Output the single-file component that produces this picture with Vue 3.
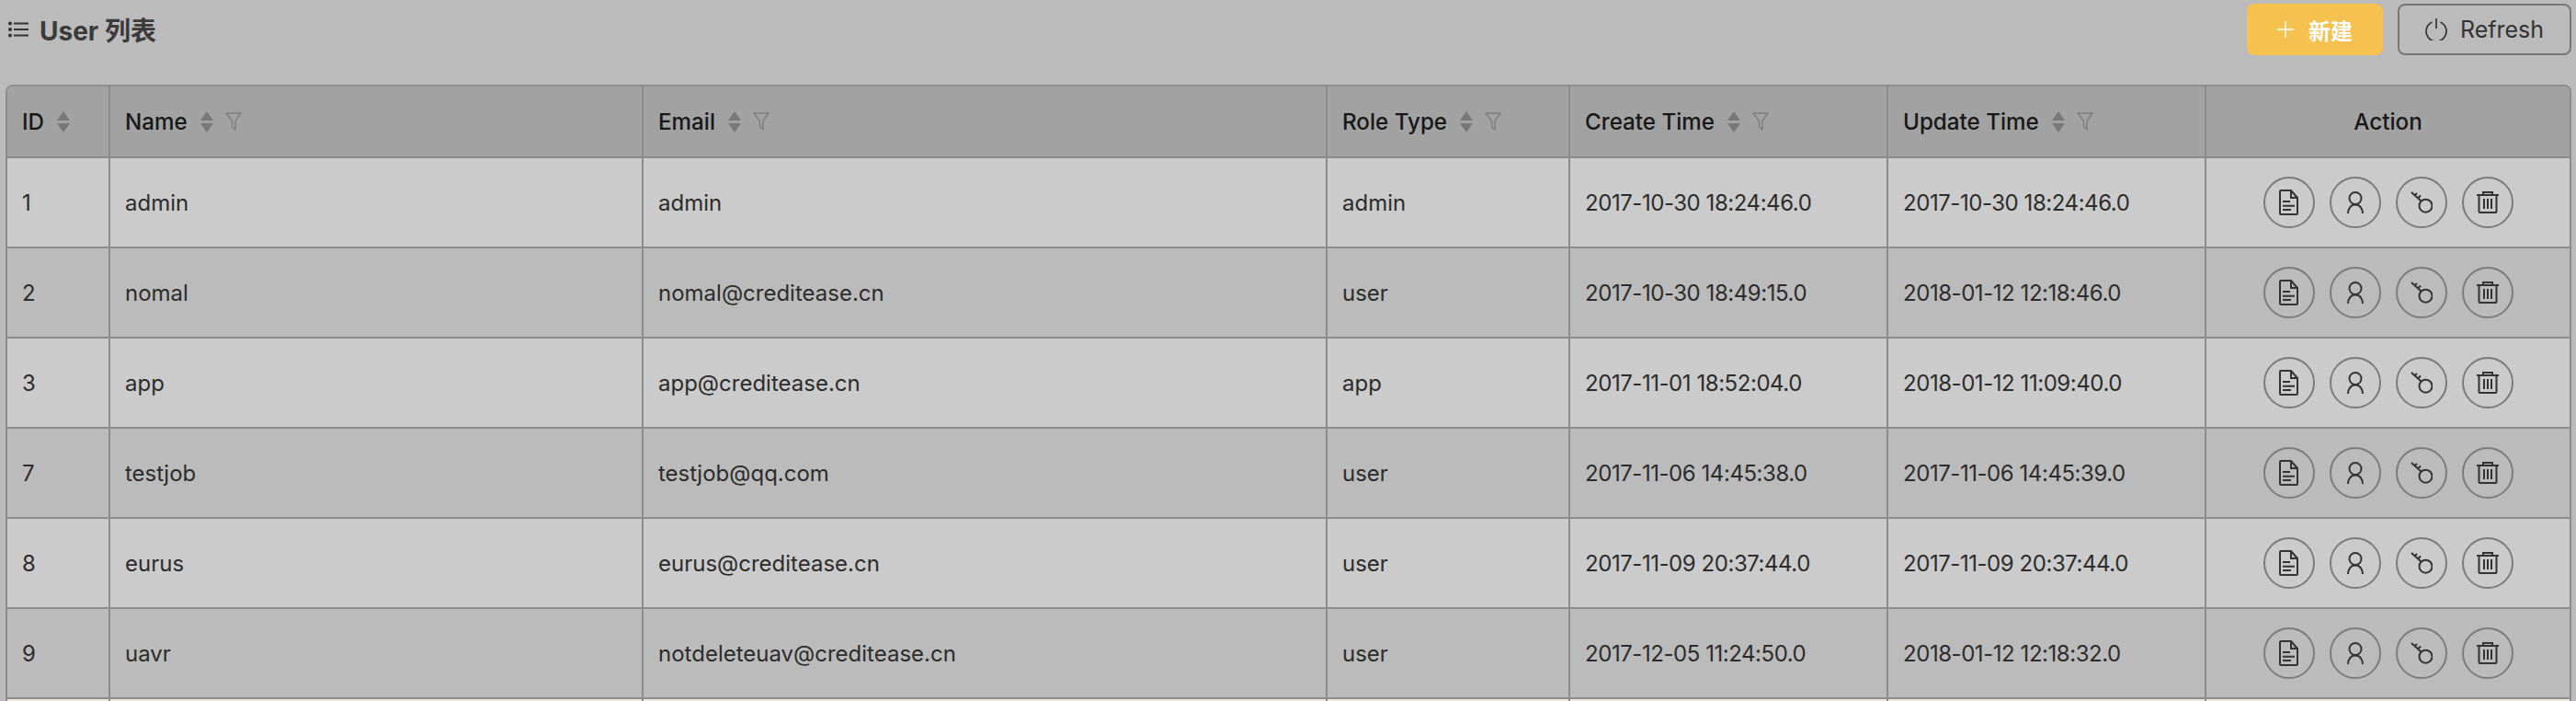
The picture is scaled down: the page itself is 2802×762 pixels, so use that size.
<template>
  <div class="page">
    <div class="top">
      <div class="title">
        <svg class="list-ic" viewBox="0 0 22 18" width="22" height="18">
          <g fill="#333">
            <circle cx="2" cy="2.5" r="2" />
            <circle cx="2" cy="9" r="2" />
            <circle cx="2" cy="15.5" r="2" />
            <rect x="6" y="1.5" width="16" height="2" />
            <rect x="6" y="8" width="16" height="2" />
            <rect x="6" y="14.5" width="16" height="2" />
          </g>
        </svg>
        <span>User 列表</span>
      </div>
      <div class="btns">
        <div class="btn add">
          <svg viewBox="0 0 18 18" width="18" height="18"><path d="M9 0v18M0 9h18" stroke="#fff" stroke-width="1.6" fill="none" /></svg>
          <span>新建</span>
        </div>
        <div class="btn refresh">
          <svg viewBox="0 0 24 24" width="24" height="24"><path d="M7.5 4a11 11 0 1 0 9 0M12 0v11" stroke="#333" stroke-width="1.7" fill="none" /></svg>
          <span>Refresh</span>
        </div>
      </div>
    </div>
    <div class="table">
      <div class="row head">
        <div v-for="c in cols" :key="c.key" class="cell" :class="c.cls">
          <span>{{ c.label }}</span>
          <span v-if="c.sort" class="sort"><i class="up"></i><i class="down"></i></span>
          <svg v-if="c.filter" class="filter" viewBox="0 0 18 20" width="18" height="20">
            <path d="M1 1h16l-6 8.500V19l-3.500-3V9.500z" fill="none" stroke="#7f7f7f" stroke-width="1.500" stroke-linejoin="round" />
          </svg>
        </div>
      </div>
      <div v-for="u in users" :key="u.id" class="row">
        <div class="cell c-id">{{ u.id }}</div>
        <div class="cell c-name">{{ u.name }}</div>
        <div class="cell c-email">{{ u.email }}</div>
        <div class="cell c-role">{{ u.role }}</div>
        <div class="cell c-time">{{ u.created }}</div>
        <div class="cell c-time">{{ u.updated }}</div>
        <div class="cell c-action">
          <span class="circle">
            <svg viewBox="0 0 21 28" width="21" height="28" fill="none" stroke="#333" stroke-width="2">
              <path d="M2 1h11l7 8v17a1 1 0 0 1-1 1H2a1 1 0 0 1-1-1V2a1 1 0 0 1 1-1zM13 1v8h7M4 13h8M4 17.700h13M4 22h9" />
            </svg>
          </span>
          <span class="circle">
            <svg viewBox="0 0 18 24" width="18" height="24" fill="none" stroke="#333" stroke-width="2">
              <circle cx="9" cy="7.500" r="6.500" />
              <path d="M1 24c0-5 3-9.500 8-9.500s8 4.500 8 9.500" />
            </svg>
          </span>
          <span class="circle">
            <svg viewBox="0 0 24 24" width="24" height="24" fill="none" stroke="#333" stroke-width="2">
              <circle cx="16.500" cy="15.700" r="7" />
              <path d="M1 1l10.500 9.500M4.500 4.500L7 2M8 7.500l3-3" />
            </svg>
          </span>
          <span class="circle">
            <svg viewBox="0 0 24 24" width="24" height="24" fill="none" stroke="#333" stroke-width="2">
              <path d="M0 4h24M7 4V1h10v3M2.500 4v18a1 1 0 0 0 1 1h17a1 1 0 0 0 1-1V4M8 8v11M12 8v11M16 8v11" />
            </svg>
          </span>
        </div>
      </div>
      <div class="row last">
        <div class="cell c-id"></div>
        <div class="cell c-name"></div>
        <div class="cell c-email"></div>
        <div class="cell c-role"></div>
        <div class="cell c-time"></div>
        <div class="cell c-time"></div>
        <div class="cell c-action"></div>
      </div>
    </div>
  </div>
</template>

<script setup>
const cols = [
  { key: 'id', label: 'ID', cls: 'c-id', sort: true },
  { key: 'name', label: 'Name', cls: 'c-name', sort: true, filter: true },
  { key: 'email', label: 'Email', cls: 'c-email', sort: true, filter: true },
  { key: 'role', label: 'Role Type', cls: 'c-role', sort: true, filter: true },
  { key: 'created', label: 'Create Time', cls: 'c-time', sort: true, filter: true },
  { key: 'updated', label: 'Update Time', cls: 'c-time', sort: true, filter: true },
  { key: 'action', label: 'Action', cls: 'c-action' }
]

const users = [
  { id: 1, name: 'admin', email: 'admin', role: 'admin', created: '2017-10-30 18:24:46.0', updated: '2017-10-30 18:24:46.0' },
  { id: 2, name: 'nomal', email: 'nomal@creditease.cn', role: 'user', created: '2017-10-30 18:49:15.0', updated: '2018-01-12 12:18:46.0' },
  { id: 3, name: 'app', email: 'app@creditease.cn', role: 'app', created: '2017-11-01 18:52:04.0', updated: '2018-01-12 11:09:40.0' },
  { id: 7, name: 'testjob', email: 'testjob@qq.com', role: 'user', created: '2017-11-06 14:45:38.0', updated: '2017-11-06 14:45:39.0' },
  { id: 8, name: 'eurus', email: 'eurus@creditease.cn', role: 'user', created: '2017-11-09 20:37:44.0', updated: '2017-11-09 20:37:44.0' },
  { id: 9, name: 'uavr', email: 'notdeleteuav@creditease.cn', role: 'user', created: '2017-12-05 11:24:50.0', updated: '2018-01-12 12:18:32.0' }
]
</script>

<style>
html, body {
  margin: 0;
  background: #bbbbbb;
  overflow: hidden;
}
</style>

<style scoped>
.page {
  width: 2802px;
  height: 762px;
  overflow: hidden;
  background: #bbbbbb;
  font-family: Inter, "Liberation Sans", "Noto Sans CJK SC", sans-serif;
  color: #2c2c2c;
  font-size: 24px;
}
.top {
  height: 92px;
  padding: 4px 5px 0 9px;
  box-sizing: border-box;
  display: flex;
  justify-content: space-between;
  align-items: flex-start;
}
.title {
  display: flex;
  align-items: center;
  gap: 12px;
  height: 56px;
  font-size: 28px;
  font-weight: 700;
  color: #3a3a3a;
}
.btns {
  display: flex;
  gap: 16px;
}
.btn {
  height: 56px;
  border-radius: 8px;
  display: flex;
  align-items: center;
  justify-content: center;
  box-sizing: border-box;
}
.add {
  width: 148px;
  background: #f5c14f;
  color: #fff;
  font-weight: 700;
  gap: 16px;
}
.refresh {
  width: 189px;
  border: 2px solid #777;
  gap: 14px;
  font-size: 25px;
  color: #333;
}
.table {
  margin: 0 5px 0 6px;
  border: 2px solid #8c8c8c;
  border-bottom: none;
  border-radius: 8px 8px 0 0;
}
.row {
  display: flex;
  height: 98px;
  border-bottom: 2px solid #8c8c8c;
  box-sizing: border-box;
  background: #cbcbcb;
}
.row:nth-child(odd) {
  background: #bbbbbb;
}
.row.last {
  background: #e9e9dd;
}
.row.head {
  height: 78px;
  background: #a2a2a2;
  color: #181818;
  font-size: 24.200px;
  font-weight: 500;
  border-radius: 6px 6px 0 0;
}
.cell {
  display: flex;
  align-items: center;
  padding-left: 16px;
  box-sizing: border-box;
  border-left: 2px solid #8c8c8c;
}
.cell:first-child {
  border-left: none;
}
.c-id { width: 110px; }
.c-name { width: 580px; }
.c-email { width: 744px; }
.c-role { width: 264px; }
.c-time { width: 346px; }
.row:not(.head) .c-time { letter-spacing: -0.45px; }
.c-action {
  flex: 1;
  justify-content: center;
  padding-left: 0;
  gap: 16px;
}
.sort {
  display: inline-flex;
  flex-direction: column;
  gap: 3px;
  margin-left: 14px;
}
.sort i {
  display: block;
  width: 0;
  height: 0;
  border-left: 7.500px solid transparent;
  border-right: 7.500px solid transparent;
}
.sort .up { border-bottom: 10.500px solid #787878; }
.sort .down { border-top: 10.500px solid #787878; }
.filter {
  margin-left: 13px;
}
.circle {
  width: 56px;
  height: 56px;
  box-sizing: border-box;
  border: 2px solid #7b7b7b;
  border-radius: 50%;
  display: flex;
  align-items: center;
  justify-content: center;
}
</style>
